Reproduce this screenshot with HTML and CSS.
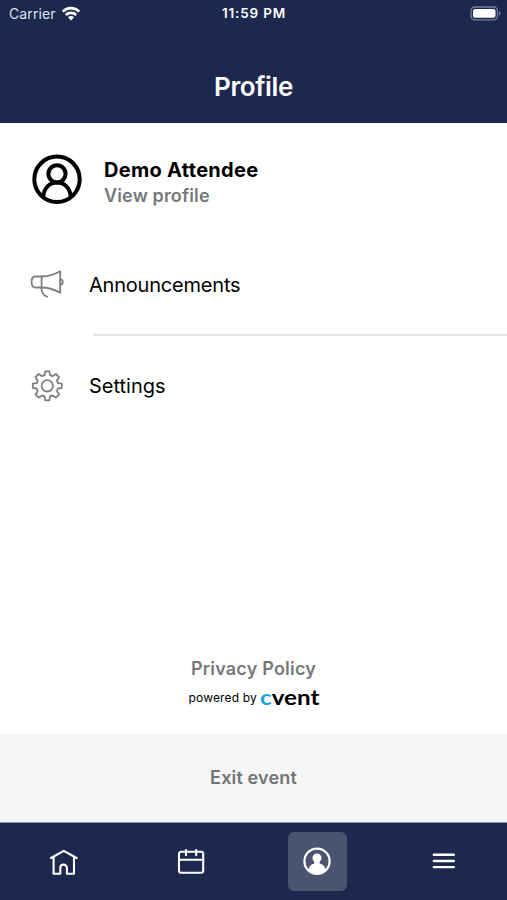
FILE: index.html
```html
<!DOCTYPE html>
<html lang="en">
<head>
  <meta charset="UTF-8">
  <meta name="viewport" content="width=device-width, initial-scale=1.0">
  <title>Profile</title>
  <link rel="stylesheet" href="styles.css">
</head>
<body>

  <!-- Header -->
  <header>
    <div class="status-bar">
      <div class="status-left">
        <span class="carrier">Carrier</span>
        <svg class="wifi" width="20" height="16" viewBox="0 0 20 16" fill="none" stroke="#fff" stroke-width="2.6">
          <path d="M1.8 5.6C6.3 1 13.7 1 18.2 5.6"/>
          <path d="M4.8 9C7.7 6.2 12.3 6.2 15.2 9"/>
          <path d="M7 11.3C8.7 9.7 11.3 9.7 13 11.3L10 14.4Z" fill="#fff" stroke="none"/>
        </svg>
      </div>
      <span class="time">11:59 PM</span>
      <div class="status-right">
        <svg width="31" height="15" viewBox="0 0 31 15">
          <rect x="1" y="1" width="26.5" height="12.8" rx="3.8" fill="none" stroke="#777e9b" stroke-width="1.3"/>
          <rect x="3" y="3" width="22.5" height="8.8" rx="2" fill="#fff"/>
          <path d="M29 5.3C31 6 31 8.8 29 9.5Z" fill="#777e9b"/>
        </svg>
      </div>
    </div>
    <h1>Profile</h1>
  </header>

  <main>
    <!-- Attendee -->
    <a class="attendee">
      <svg width="52" height="52" viewBox="0 0 52 52" fill="none" stroke="#000" stroke-width="4">
        <circle cx="26" cy="26.3" r="22.7"/>
        <circle cx="26" cy="20.8" r="8.6"/>
        <path d="M12.2 43.8C13 34.8 18.5 29.6 26 29.6S39 34.8 39.8 43.8"/>
      </svg>
      <div class="attendee-text">
        <h2>Demo Attendee</h2>
        <p>View profile</p>
      </div>
    </a>

    <!-- Menu rows -->
    <a class="row">
      <svg width="36" height="32" viewBox="0 0 36 32" fill="none" stroke="#7b8085" stroke-width="1.8" stroke-linejoin="round" stroke-linecap="round">
        <path d="M12.6 7.5H6.2C3.4 7.5 2.6 9.8 2.6 13S3.4 18.5 6.2 18.5H12.6Z"/>
        <path d="M12.6 7.5C19.5 7.5 25.5 5.5 31.2 2.3V23.8C25.5 20.7 19.5 18.5 12.6 18.5"/>
        <path d="M31.2 10.4C34.6 10.4 34.6 15.8 31.2 15.8"/>
        <path d="M12.4 18.7C12.4 23 14.2 26.3 18 27.7"/>
      </svg>
      <span class="announcements">Announcements</span>
    </a>
    <hr>
    <a class="row">
      <svg width="36" height="32" viewBox="0 0 36 32" fill="none" stroke="#7b8085" stroke-width="1.8" stroke-linejoin="round">
        <g transform="translate(18.3 15.8)">
          <circle r="5.7"/>
          <path d="M-2.1 -14.5H2.1L2.7 -10.6L5.2 -9.6L8.6 -11.8L11.8 -8.6L9.6 -5.2L10.6 -2.7L14.5 -2.1V2.1L10.6 2.7L9.6 5.2L11.8 8.6L8.6 11.8L5.2 9.6L2.7 10.6L2.1 14.5H-2.1L-2.7 10.6L-5.2 9.6L-8.6 11.8L-11.8 8.6L-9.6 5.2L-10.6 2.7L-14.5 2.1V-2.1L-10.6 -2.7L-9.6 -5.2L-11.8 -8.6L-8.6 -11.8L-5.2 -9.6L-2.7 -10.6Z"/>
        </g>
      </svg>
      <span>Settings</span>
    </a>

    <!-- Legal -->
    <div class="legal">
      <a class="privacy">Privacy Policy</a>
      <div class="powered">
        <span class="powered-by">powered by</span>
        <span class="brand"><span class="brand-c">c</span>vent</span>
      </div>
    </div>
  </main>

  <button class="exit">Exit event</button>

  <!-- Tab bar -->
  <nav>
    <a class="tab">
      <svg width="30" height="30" viewBox="0 0 30 30" fill="none" stroke="#fff" stroke-width="2.1" stroke-linejoin="round" stroke-linecap="round">
        <path d="M1 11L13.8 3.8L26.6 11"/>
        <path d="M3.6 10V26.8H10.3V20.9C10.3 16.5 16.9 16.5 16.9 20.9V26.8H24V10"/>
      </svg>
    </a>
    <a class="tab">
      <svg width="30" height="30" viewBox="0 0 30 30" fill="none" stroke="#fff" stroke-width="2.1" stroke-linecap="round">
        <rect x="3" y="4.8" width="24.2" height="21" rx="2"/>
        <path d="M3 12.8H27.2M10 3V8.3M20.2 3V8.3"/>
      </svg>
    </a>
    <a class="tab active">
      <svg width="30" height="30" viewBox="0 0 30 30" fill="#fff">
        <circle cx="14" cy="14.2" r="12.6" fill="none" stroke="#fff" stroke-width="2.2"/>
        <circle cx="14" cy="11" r="4.5"/>
        <rect x="11.4" y="13.2" width="5.2" height="5"/>
        <path d="M5.5 22.7C6.2 18.1 9 16.4 14 16.4S21.8 18.1 22.5 22.7C20 25.7 17 27 14 27S8 25.7 5.5 22.7Z"/>
      </svg>
    </a>
    <a class="tab">
      <svg width="30" height="30" viewBox="0 0 30 30" stroke="#fff" stroke-width="2.4" stroke-linecap="round">
        <path d="M4.8 7.8H24.8M4.8 14H24.8M4.8 20.1H24.8"/>
      </svg>
    </a>
  </nav>

</body>
</html>
```

FILE: styles.css
```css
* {
  box-sizing: border-box;
}
body {
  display: flex;
  flex-direction: column;
  height: 900px;
  margin: 0;
  font-family: Inter, "Liberation Sans", sans-serif;
  background: #fff;
  color: #000;
}
h1, h2, p {
  margin: 0;
}
svg {
  display: block;
  flex: none;
}
header {
  height: 123px;
  background: #1c284d;
  color: #fff;
}
.status-bar {
  display: grid;
  grid-template-columns: 1fr auto 1fr;
  align-items: center;
  height: 27px;
  padding: 0 6px 0 9px;
}
.status-left {
  display: flex;
  align-items: center;
  gap: 5px;
}
.carrier {
  font-size: 14px;
  letter-spacing: 0.1px;
  line-height: 27px;
  color: #dfe3ef;
}
.time {
  font-size: 13.5px;
  font-weight: 600;
  letter-spacing: 0.85px;
  line-height: 27px;
  margin-right: 2px;
}
.status-right {
  display: flex;
  justify-content: flex-end;
}
header h1 {
  padding-top: 44px;
  font-size: 26px;
  font-weight: 600;
  letter-spacing: -0.4px;
  line-height: 32px;
  text-align: center;
}
main {
  display: flex;
  flex-direction: column;
  height: 611px;
}
.attendee {
  display: flex;
  align-items: center;
  gap: 21px;
  height: 112px;
  padding-left: 31px;
}
.attendee-text {
  padding-top: 6px;
}
.attendee h2 {
  font-size: 20px;
  font-weight: 650;
  letter-spacing: 0.3px;
  line-height: 26px;
}
.attendee p {
  font-size: 18px;
  font-weight: 600;
  letter-spacing: 0.15px;
  line-height: 25px;
  color: #77787a;
}
.row {
  display: flex;
  align-items: center;
  gap: 24px;
  height: 99px;
  padding-left: 29px;
  font-size: 20px;
}
.announcements {
  letter-spacing: -0.2px;
}
hr {
  width: 414px;
  height: 2px;
  margin: 0 0 0 93px;
  border: 0;
  background: #e5e5e6;
}
.legal {
  display: flex;
  flex-direction: column;
  align-items: center;
  margin-top: auto;
  padding-bottom: 23px;
}
.privacy {
  font-size: 18px;
  font-weight: 600;
  letter-spacing: 0.2px;
  line-height: 26px;
  color: #77787a;
}
.powered {
  display: flex;
  align-items: center;
  gap: 3px;
  width: 130px;
  height: 26px;
  margin-top: 3px;
  line-height: 26px;
}
.powered-by {
  font-size: 12px;
  letter-spacing: 0.15px;
  white-space: nowrap;
}
.brand {
  padding-bottom: 2px;
  font-family: Lato, sans-serif;
  font-size: 20px;
  font-weight: 700;
  transform: scaleX(1.21);
  transform-origin: left;
}
.brand-c {
  color: #1ba4e0;
}
.exit {
  height: 88px;
  padding: 0 0 2px;
  border: 0;
  background: #f6f6f6;
  color: #707577;
  font-family: inherit;
  font-size: 18px;
  font-weight: 600;
  letter-spacing: 0.15px;
}
nav {
  display: flex;
  justify-content: space-between;
  height: 78px;
  padding: 9px 33px 0 35px;
  border-top: 1px solid #8c92a8;
  background: #1c284d;
}
.tab {
  display: flex;
  align-items: center;
  justify-content: center;
  width: 59px;
  height: 59px;
  border-radius: 6px;
}
.active {
  background: #4a5471;
}
```
